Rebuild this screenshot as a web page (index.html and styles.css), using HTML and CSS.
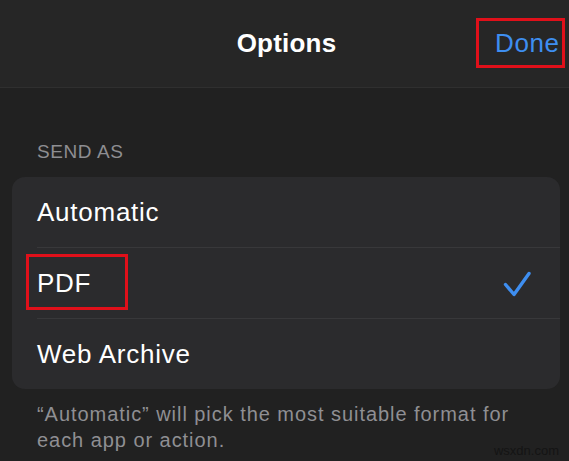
FILE: index.html
```html
<!DOCTYPE html>
<html lang="en">
<head>
<meta charset="utf-8">
<title>Options</title>
<link rel="stylesheet" href="styles.css">
</head>
<body>
<div class="screen">
  <header class="navbar">
    <span class="nav-spacer"></span>
    <h1 class="nav-title">Options</h1>
    <button class="nav-done">Done</button>
  </header>
  <main class="content">
    <h2 class="section-label">SEND AS</h2>
    <ul class="list">
      <li class="row"><span class="row-label">Automatic</span></li>
      <li class="row"><span class="row-label highlighted">PDF</span>
        <svg class="check" viewBox="0 0 28 28" width="28" height="28" aria-hidden="true">
          <path d="M2.5 14.5 L11 24.5 L26 3.5" fill="none" stroke="#3e8ef0" stroke-width="3.4" stroke-linecap="round" stroke-linejoin="round"/>
        </svg>
      </li>
      <li class="row"><span class="row-label">Web Archive</span></li>
    </ul>
    <p class="footnote">“Automatic” will pick the most suitable format for each app or action.</p>
  </main>
  <span class="watermark">wsxdn.com</span>
</div>
</body>
</html>
```

FILE: styles.css
```css
*, *::before, *::after { box-sizing: border-box; }
html, body {
  margin: 0;
  padding: 0;
  background: #202020;
}
body {
  font-family: "Liberation Sans", Arial, sans-serif;
  color: #ffffff;
}
.screen {
  position: relative;
  width: 569px;
  height: 461px;
  overflow: hidden;
  background: #212121;
}
.navbar {
  height: 88px;
  display: grid;
  grid-template-columns: 1fr auto 1fr;
  align-items: center;
  background: #262626;
  border-bottom: 1px solid #2f2f2f;
  padding: 0 4px 0 8px;
}
.nav-title {
  margin: 0 0 2px 0;
  font-size: 26px;
  font-weight: 700;
  color: #ffffff;
  line-height: 30px;
  letter-spacing: 0.2px;
}
.nav-done {
  justify-self: end;
  font-family: inherit;
  font-size: 26px;
  line-height: 30px;
  letter-spacing: 0.6px;
  color: #3e8ef0;
  background: transparent;
  border: 3px solid #e0101a;
  padding: 7px 0 7px 16px;
  margin: 0 0 1px 0;
  width: 89px;
  height: 50px;
  text-align: left;
  white-space: nowrap;
}
.content {
  padding: 53px 9px 0 12px;
}
.section-label {
  margin: 0 0 14px 25px;
  font-size: 19px;
  line-height: 22px;
  font-weight: 400;
  letter-spacing: 0.6px;
  color: #8e8e92;
}
.list {
  list-style: none;
  margin: 0;
  padding: 0;
  background: #2b2b2d;
  border-radius: 13px;
}
.row {
  height: 70px;
  margin-left: 25px;
  padding-right: 29px;
  display: flex;
  align-items: center;
  justify-content: space-between;
  font-size: 26px;
  letter-spacing: 0.75px;
  color: #ffffff;
}
.row + .row {
  height: 71px;
  border-top: 1px solid #38383a;
}
.row-label {
  line-height: 30px;
}
.highlighted {
  position: relative;
}
.highlighted::after {
  content: "";
  position: absolute;
  left: -11px;
  top: -14px;
  width: 102px;
  height: 56px;
  border: 3px solid #e0101a;
}
.check {
  display: block;
  margin-top: 1px;
}
.footnote {
  margin: 12px 0 0 25px;
  padding-right: 10px;
  font-size: 20px;
  line-height: 26px;
  letter-spacing: 0.95px;
  color: #8f8f93;
}
.watermark {
  position: absolute;
  right: 10px;
  bottom: 3px;
  font-size: 13px;
  color: #141414;
}
```
